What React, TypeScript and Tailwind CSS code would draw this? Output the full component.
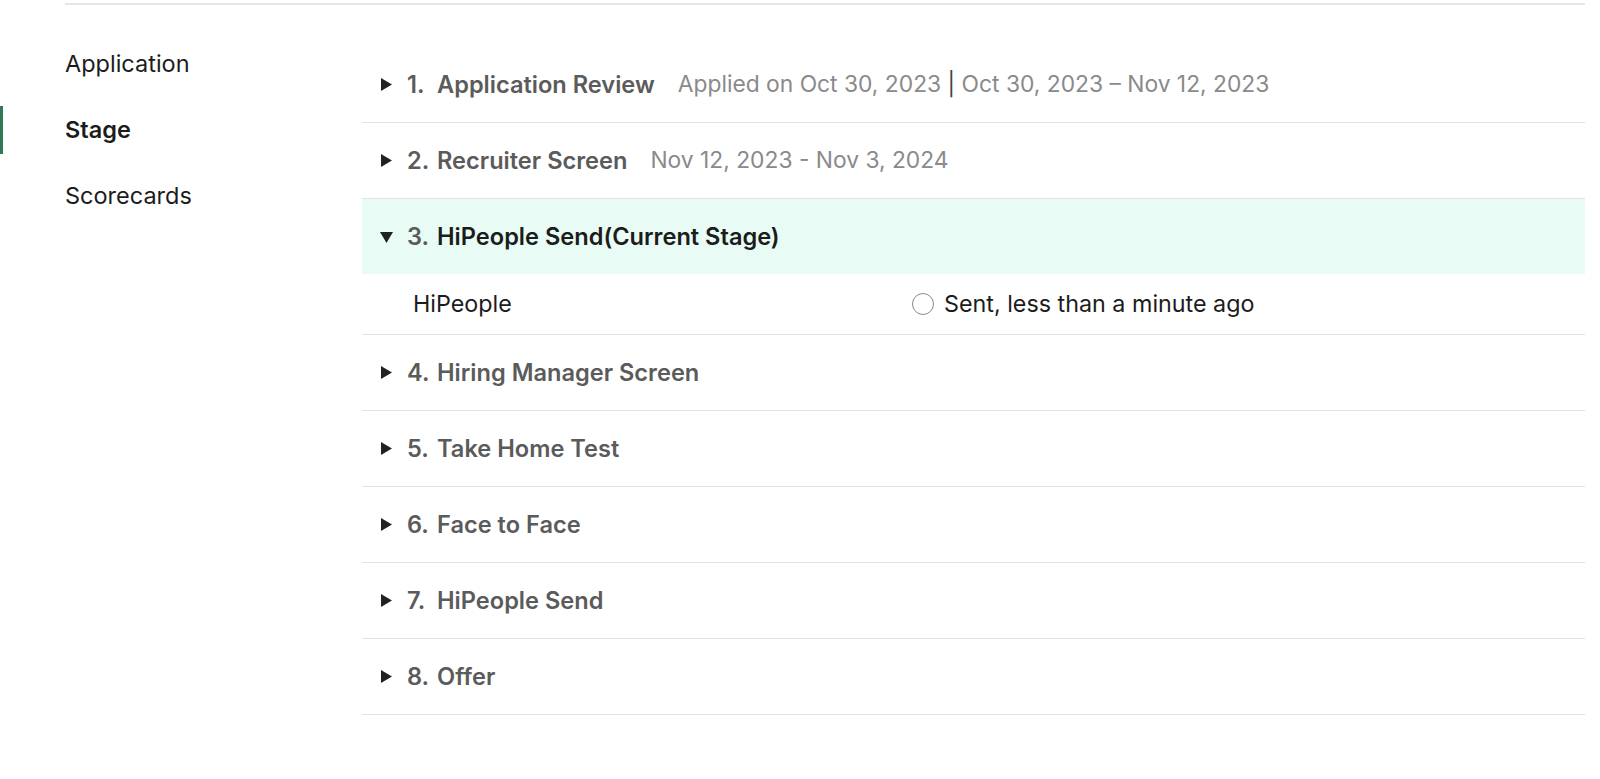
import React from 'react';

type Stage = {
  num: number;
  title: string;
  dates?: React.ReactNode;
  open?: boolean;
};

const stages: Stage[] = [
  {
    num: 1,
    title: 'Application Review',
    dates: (
      <>
        Applied on Oct 30, 2023 <span className="text-[#444]">|</span> Oct 30, 2023 – Nov 12, 2023
      </>
    ),
  },
  { num: 2, title: 'Recruiter Screen', dates: 'Nov 12, 2023 - Nov 3, 2024' },
  { num: 3, title: 'HiPeople Send(Current Stage)', open: true },
  { num: 4, title: 'Hiring Manager Screen' },
  { num: 5, title: 'Take Home Test' },
  { num: 6, title: 'Face to Face' },
  { num: 7, title: 'HiPeople Send' },
  { num: 8, title: 'Offer' },
];

function Caret({ open }: { open?: boolean }) {
  return open ? (
    <svg width="13" height="12" viewBox="0 0 13 12" className="shrink-0">
      <path d="M0 1h13L6.5 12z" fill="#222" />
    </svg>
  ) : (
    <svg width="12" height="13" viewBox="0 0 12 13" className="shrink-0">
      <path d="M1 0v13l11-6.5z" fill="#222" />
    </svg>
  );
}

function StageRow({ stage }: { stage: Stage }) {
  return (
    <div className="border-b border-[#e2e2e2]">
      <div className={`flex items-center h-[75px] pl-[18px] ${stage.open ? 'bg-[#e8fcf5]' : ''}`}>
        <div className="w-[12px] flex justify-center">
          <Caret open={stage.open} />
        </div>
        <span className="ml-[15px] w-[30px] shrink-0 text-[23.6px] font-semibold text-[#5b5b5b]">
          {stage.num}.
        </span>
        <span
          className={`text-[23.6px] font-semibold ${stage.open ? 'text-[#1c1c1c]' : 'text-[#5b5b5b]'}`}
        >
          {stage.title}
        </span>
        {stage.dates && <span className="ml-[23px] text-[22.8px] text-[#8a8a8a]">{stage.dates}</span>}
      </div>
      {stage.open && (
        <div className="flex items-center h-[60px] pl-[51px] text-[23.3px] text-[#1c1c1c]">
          <span className="w-[499px]">HiPeople</span>
          <span className="w-[22px] h-[22px] rounded-full border-[1.5px] border-[#8a8a8a]" />
          <span className="ml-[10px]">Sent, less than a minute ago</span>
        </div>
      )}
    </div>
  );
}

export default function App() {
  return (
    <div
      className="min-h-[779px] bg-white leading-none"
      style={{ fontFamily: 'Inter, "Liberation Sans", Arial, sans-serif' }}
    >
      <div className="pt-[3px] ml-[65px] mr-[15px] border-b-2 border-[#e6e6e6]" />

      <div className="flex mt-[35px]">
        {/* Side nav */}
        <nav className="w-[362px] shrink-0 flex flex-col gap-[18px] text-[23.5px] text-[#1c1c1c]">
          <div className="h-[48px] flex items-center pl-[65px]">Application</div>
          <div className="h-[48px] flex items-center pl-[62px] border-l-[3px] border-[#2d7a55] font-semibold">
            Stage
          </div>
          <div className="h-[48px] flex items-center pl-[65px]">Scorecards</div>
        </nav>

        {/* Stages */}
        <div className="flex-1 mr-[15px] mt-[7px]">
          {stages.map((s) => (
            <StageRow key={s.num} stage={s} />
          ))}
        </div>
      </div>
    </div>
  );
}
